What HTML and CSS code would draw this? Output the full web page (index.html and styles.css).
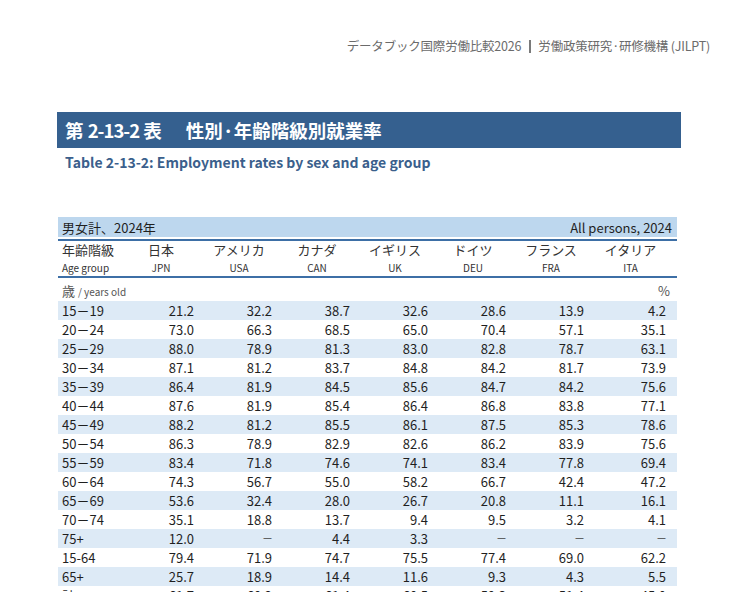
FILE: index.html
```html
<!DOCTYPE html>
<html>
<head>
  <title>第 2-13-2 表 性別·年齢階級別就業率</title>
  <link rel="stylesheet" href="styles.css">
</head>
<body>
  <div class="page">
    <div class="running-head">データブック国際労働比較2026<span class="sep"></span>労働政策研究·研修機構 (JILPT)</div>

    <h1 class="title-bar"><span class="table-no">第 <span class="num">2-13-2</span> 表</span>性別·年齢階級別就業率</h1>
    <h2 class="subtitle">Table 2-13-2: Employment rates by sex and age group</h2>

    <div class="data-table">
      <div class="caption">
        <span>男女計、2024年</span>
        <span>All persons, 2024</span>
      </div>

      <div class="head">
        <div class="grid head-ja">
          <div class="label">年齢階級</div>
          <div>日本</div><div>アメリカ</div><div>カナダ</div><div>イギリス</div><div>ドイツ</div><div>フランス</div><div>イタリア</div>
        </div>
        <div class="grid head-en">
          <div class="label">Age group</div>
          <div>JPN</div><div>USA</div><div>CAN</div><div>UK</div><div>DEU</div><div>FRA</div><div>ITA</div>
        </div>
      </div>

      <div class="unit-row">
        <span>歳 <span class="en">/ years old</span></span>
        <span>%</span>
      </div>

      <div id="rows"></div>
    </div>
  </div>

  <script>
    // Age group rows: label, then JPN USA CAN UK DEU FRA ITA
    const rows = [
      ['15－19', '21.2', '32.2', '38.7', '32.6', '28.6', '13.9', '4.2'],
      ['20－24', '73.0', '66.3', '68.5', '65.0', '70.4', '57.1', '35.1'],
      ['25－29', '88.0', '78.9', '81.3', '83.0', '82.8', '78.7', '63.1'],
      ['30－34', '87.1', '81.2', '83.7', '84.8', '84.2', '81.7', '73.9'],
      ['35－39', '86.4', '81.9', '84.5', '85.6', '84.7', '84.2', '75.6'],
      ['40－44', '87.6', '81.9', '85.4', '86.4', '86.8', '83.8', '77.1'],
      ['45－49', '88.2', '81.2', '85.5', '86.1', '87.5', '85.3', '78.6'],
      ['50－54', '86.3', '78.9', '82.9', '82.6', '86.2', '83.9', '75.6'],
      ['55－59', '83.4', '71.8', '74.6', '74.1', '83.4', '77.8', '69.4'],
      ['60－64', '74.3', '56.7', '55.0', '58.2', '66.7', '42.4', '47.2'],
      ['65－69', '53.6', '32.4', '28.0', '26.7', '20.8', '11.1', '16.1'],
      ['70－74', '35.1', '18.8', '13.7', '9.4', '9.5', '3.2', '4.1'],
      ['75+', '12.0', '－', '4.4', '3.3', '－', '－', '－'],
      ['15-64', '79.4', '71.9', '74.7', '75.5', '77.4', '69.0', '62.2'],
      ['65+', '25.7', '18.9', '14.4', '11.6', '9.3', '4.3', '5.5'],
      ['計', '61.7', '60.2', '61.4', '60.5', '59.3', '51.4', '45.0']
    ];

    const container = document.getElementById('rows');
    rows.forEach((cells, i) => {
      const row = document.createElement('div');
      row.className = 'grid data-row' + (i % 2 === 0 ? ' shaded' : '');
      cells.forEach((text, j) => {
        const cell = document.createElement('div');
        if (j === 0) cell.className = 'label';
        else if (text === '－') cell.className = 'dash';
        cell.textContent = text;
        row.appendChild(cell);
      });
      container.appendChild(row);
    });
  </script>
</body>
</html>
```

FILE: styles.css
```css
body {
  margin: 0;
  font-family: 'Noto Sans CJK JP', 'Noto Sans', sans-serif;
  color: #1f1f1f;
  background: #ffffff;
  overflow: hidden;
}

.page {
  width: 732px;
  padding-top: 36px;
}

/* Running head */
.running-head {
  height: 20px;
  line-height: 20px;
  padding-right: 22px;
  text-align: right;
  font-size: 12.5px;
  color: #6b6b6b;
  letter-spacing: -0.2px;
}

.running-head .sep {
  display: inline-block;
  width: 2px;
  height: 13px;
  margin: 0 7px 0 8px;
  background: #7a7a7a;
  vertical-align: -2px;
}

/* Titles */
.title-bar {
  margin: 56px 0 0 57px;
  width: 624px;
  height: 36px;
  box-sizing: border-box;
  padding-left: 8px;
  line-height: 36px;
  background: #35608f;
  color: #ffffff;
  font-size: 18.5px;
  font-weight: 700;
}

.title-bar .table-no {
  margin-right: 24px;
}

.title-bar .num {
  letter-spacing: -1px;
}

.subtitle {
  margin: 4px 0 0 65px;
  height: 20px;
  line-height: 20px;
  font-size: 14px;
  font-weight: 600;
  color: #3b5f8c;
}

/* Table */
.data-table {
  margin: 45px 0 0 58px;
  width: 619px;
  font-size: 13px;
}

.grid {
  display: grid;
  grid-template-columns: 64px repeat(6, 78px) 87px;
}

.grid .label {
  padding-left: 4px;
  text-align: left;
}

.caption {
  display: flex;
  justify-content: space-between;
  align-items: center;
  height: 20px;
  padding: 0 5px 0 4px;
  background: #bdd7ee;
}

.head {
  margin-top: 2px;
  border-top: 2px solid #3d6fa6;
  border-bottom: 2px solid #3d6fa6;
}

.head-ja {
  height: 18px;
  line-height: 18px;
  color: #333333;
}

.head-en {
  height: 17px;
  line-height: 17px;
  font-size: 10px;
  color: #333333;
}

.head-ja div, .head-en div {
  text-align: center;
}

.head-ja div:last-child, .head-en div:last-child {
  padding-right: 6px;
}

.unit-row {
  display: flex;
  justify-content: space-between;
  align-items: center;
  height: 23px;
  padding: 2px 7px 0 4px;
  box-sizing: border-box;
  color: #555555;
}

.unit-row .en {
  font-size: 10px;
}

.data-row {
  height: 19px;
  line-height: 19px;
}

.data-row.shaded {
  background: #ddeaf6;
}

.data-row div {
  text-align: right;
  padding-right: 6px;
}

.data-row div:last-child {
  padding-right: 11px;
}

.data-row div.dash {
  font-size: 11px;
  padding-right: 5px;
  color: #444444;
}

.data-row div.dash:last-child {
  padding-right: 10px;
}
```
